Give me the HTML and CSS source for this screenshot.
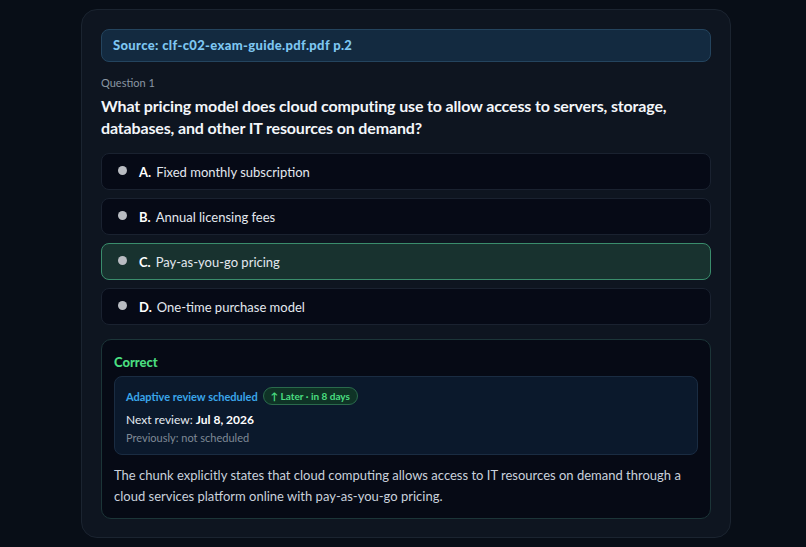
FILE: index.html
```html
<!DOCTYPE html>
<html lang="en">
<head>
  <meta charset="UTF-8">
  <meta name="viewport" content="width=device-width, initial-scale=1.0">
  <title>Quiz</title>
  <link rel="stylesheet" href="styles.css">
</head>
<body>
  <div class="quiz-card">
    <div class="source">Source: clf-c02-exam-guide.pdf.pdf p.2</div>
    <div class="q-label">Question 1</div>
    <h1 class="q-text">What pricing model does cloud computing use to allow access to servers, storage, databases, and other IT resources on demand?</h1>

    <div class="options">
      <div class="option"><span class="dot"></span><b>A.</b> Fixed monthly subscription</div>
      <div class="option"><span class="dot"></span><b>B.</b> Annual licensing fees</div>
      <div class="option selected"><span class="dot"></span><b>C.</b> Pay-as-you-go pricing</div>
      <div class="option"><span class="dot"></span><b>D.</b> One-time purchase model</div>
    </div>

    <div class="feedback">
      <div class="verdict">Correct</div>
      <div class="review">
        <div class="review-head">
          <span class="review-title">Adaptive review scheduled</span>
          <span class="pill">↑ Later · in 8 days</span>
        </div>
        <div class="next">Next review: <b>Jul 8, 2026</b></div>
        <div class="prev">Previously: not scheduled</div>
      </div>
      <p class="explain">The chunk explicitly states that cloud computing allows access to IT resources on demand through a cloud services platform online with pay-as-you-go pricing.</p>
    </div>
  </div>
</body>
</html>
```

FILE: styles.css
```css
body {
  margin: 0;
  background: #080e17;
  font-family: 'Lato', 'Open Sans', Arial, sans-serif;
  color: #e6ebf2;
}
.quiz-card {
  width: 610px;
  margin: 9px 0 0 81px;
  padding: 19px 19px 18px 19px;
  background: #0e1520;
  border: 1px solid #1b2430;
  border-radius: 16px;
}
.source {
  height: 31px;
  line-height: 31px;
  padding: 0 11px;
  background: #132a40;
  border: 1px solid #24445e;
  border-radius: 8px;
  color: #7ec6f1;
  font-weight: 900;
  font-size: 13px;
  letter-spacing: 0.35px;
}
.q-label {
  margin-top: 14px;
  font-size: 11px;
  color: #8a95a3;
}
.q-text {
  margin: 6px 0 14px 0;
  font-size: 16px;
  line-height: 22px;
  font-weight: 700;
  letter-spacing: -0.15px;
  color: #f3f6fa;
}
.options {
  display: flex;
  flex-direction: column;
  gap: 8px;
}
.option {
  height: 35px;
  display: flex;
  align-items: center;
  padding: 0 16px;
  background: #060a16;
  border: 1px solid #1a2230;
  border-radius: 8px;
  font-size: 13px;
  color: #e3e8ef;
}
.option b {
  margin-right: 5px;
  color: #fff;
}
.option.selected {
  background: #18322f;
  border-color: #3a8d6c;
}
.dot {
  width: 9px;
  height: 9px;
  border-radius: 50%;
  background: #b9bcc2;
  margin: -3px 12px 0 0;
}
.feedback {
  margin-top: 14px;
  padding: 12px 12px 11px 12px;
  background: #060a15;
  border: 1px solid #1c3538;
  border-radius: 10px;
}
.verdict {
  color: #4ade80;
  font-weight: 900;
  font-size: 13px;
  line-height: 20px;
}
.review {
  margin-top: 4px;
  padding: 10px 11px 10px 11px;
  background: #0b192c;
  border: 1px solid #1a2c42;
  border-radius: 8px;
}
.review-head {
  display: flex;
  align-items: center;
  gap: 5px;
}
.review-title {
  color: #3aa6ea;
  font-weight: 700;
  font-size: 11px;
}
.pill {
  font-size: 10px;
  font-weight: 700;
  color: #4ade80;
  background: #0f3326;
  border: 1px solid #2a6a4c;
  border-radius: 9px;
  padding: 2px 7px;
}
.next {
  margin-top: 7px;
  font-size: 12px;
  color: #e6ebf2;
}
.next b {
  color: #fff;
}
.prev {
  margin-top: 4px;
  font-size: 11px;
  color: #7f8996;
}
.explain {
  margin: 10px 0 0 0;
  font-size: 13px;
  line-height: 21px;
  color: #c9d1dc;
}
```
